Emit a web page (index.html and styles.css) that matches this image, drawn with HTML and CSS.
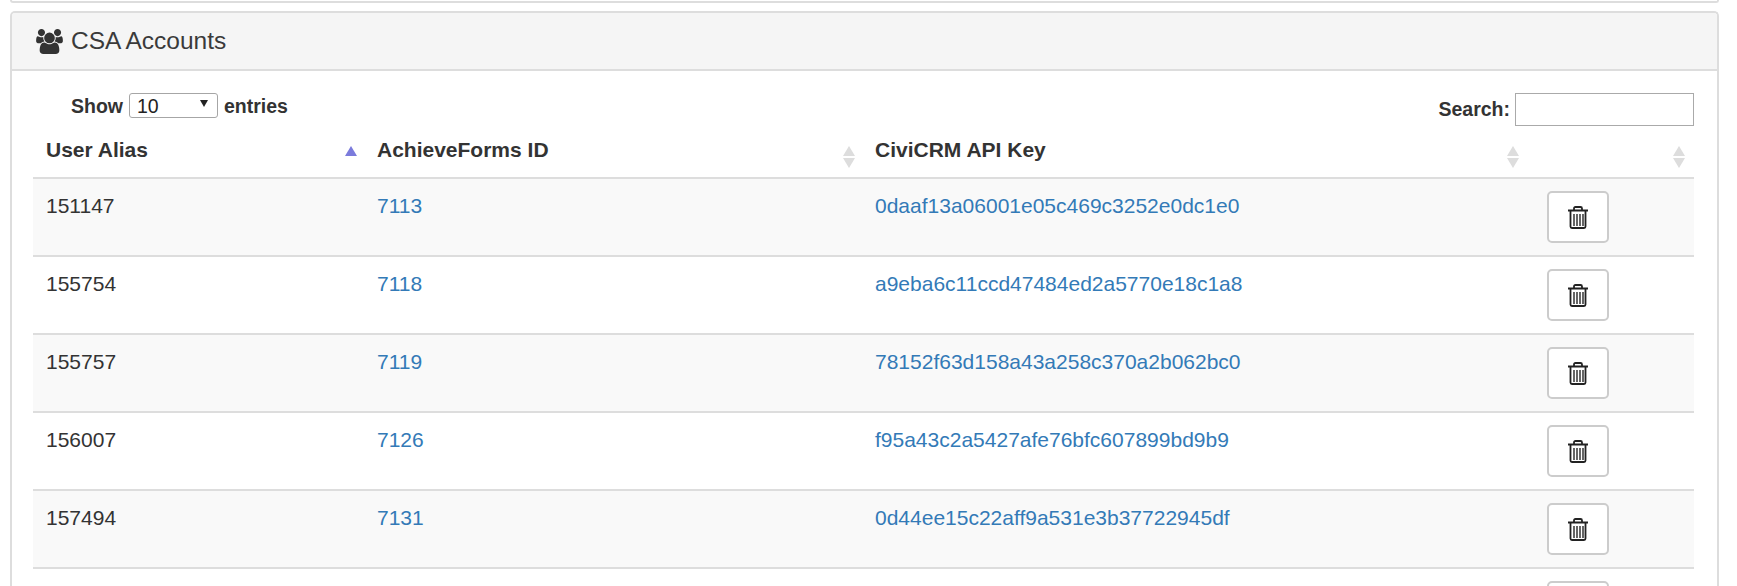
FILE: index.html
```html
<!DOCTYPE html>
<html lang="en">
<head>
<meta charset="utf-8">
<title>CSA Accounts</title>
<link rel="stylesheet" href="styles.css">
</head>
<body>
<div class="page">
  <div class="stub"></div>
  <section class="panel">
    <header class="panel-heading">
      <svg class="users" viewBox="0 0 1920 1792" aria-hidden="true"><path d="M593 896q-162 5-265 128h-134q-82 0-138-40.500t-56-118.500q0-353 124-353 6 0 43.500 21t97.500 42.500 119 21.500q67 0 133-23-5 37-5 66 0 139 81 256zm1071 637q0 120-73 189.500t-194 69.500h-874q-121 0-194-69.500t-73-189.500q0-53 3.500-103.500t14-109 26.500-108.500 43-97.500 62-81 85.500-53.500 111.500-20q10 0 43 21.500t73 48 107 48 135 21.500 135-21.500 107-48 73-48 43-21.500q61 0 111.500 20t85.500 53.500 62 81 43 97.500 26.500 108.500 14 109 3.500 103.500zm-1024-1277q0 106-75 181t-181 75-181-75-75-181 75-181 181-75 181 75 75 181zm704 384q0 159-112.500 271.500t-271.500 112.500-271.500-112.500-112.500-271.500 112.500-271.500 271.500-112.500 271.500 112.500 112.500 271.500zm576 225q0 78-56 118.500t-138 40.500h-134q-103-123-265-128 81-117 81-256 0-29-5-66 66 23 133 23 59 0 119-21.500t97.500-42.500 43.500-21q124 0 124 353zm-128-609q0 106-75 181t-181 75-181-75-75-181 75-181 181-75 181 75 75 181z"/></svg>
      <span class="panel-title">CSA Accounts</span>
    </header>
    <div class="panel-body">
      <div class="controls">
        <label class="length">Show
          <span class="select"><span>10</span><i class="caret"></i></span>
          entries</label>
        <label class="search">Search: <input type="text" class="search-input"></label>
      </div>
      <table class="grid">
        <colgroup><col class="c1"><col class="c2"><col class="c3"><col class="c4"></colgroup>
        <thead>
          <tr>
            <th><div class="th"><span class="th-label">User Alias</span><i class="sort active"></i></div></th>
            <th><div class="th"><span class="th-label">AchieveForms ID</span><i class="sort"></i></div></th>
            <th><div class="th"><span class="th-label">CiviCRM API Key</span><i class="sort"></i></div></th>
            <th><div class="th"><span class="th-label"></span><i class="sort"></i></div></th>
          </tr>
        </thead>
        <tbody>
          <tr class="odd"><td>151147</td><td><a href="#">7113</a></td><td><a href="#">0daaf13a06001e05c469c3252e0dc1e0</a></td><td><button class="del" aria-label="Delete"><svg class="trash" viewBox="0 0 20 23"><use href="#trash"/></svg></button></td></tr>
          <tr><td>155754</td><td><a href="#">7118</a></td><td><a href="#">a9eba6c11ccd47484ed2a5770e18c1a8</a></td><td><button class="del" aria-label="Delete"><svg class="trash" viewBox="0 0 20 23"><use href="#trash"/></svg></button></td></tr>
          <tr class="odd"><td>155757</td><td><a href="#">7119</a></td><td><a href="#">78152f63d158a43a258c370a2b062bc0</a></td><td><button class="del" aria-label="Delete"><svg class="trash" viewBox="0 0 20 23"><use href="#trash"/></svg></button></td></tr>
          <tr><td>156007</td><td><a href="#">7126</a></td><td><a href="#">f95a43c2a5427afe76bfc607899bd9b9</a></td><td><button class="del" aria-label="Delete"><svg class="trash" viewBox="0 0 20 23"><use href="#trash"/></svg></button></td></tr>
          <tr class="odd"><td>157494</td><td><a href="#">7131</a></td><td><a href="#">0d44ee15c22aff9a531e3b37722945df</a></td><td><button class="del" aria-label="Delete"><svg class="trash" viewBox="0 0 20 23"><use href="#trash"/></svg></button></td></tr>
          <tr><td></td><td></td><td></td><td><button class="del" aria-label="Delete"><svg class="trash" viewBox="0 0 20 23"><use href="#trash"/></svg></button></td></tr>
        </tbody>
      </table>
    </div>
  </section>
</div>
<svg class="defs" aria-hidden="true"><defs>
  <g id="trash">
    <path class="tr-line" d="M0 4.500H20M6 4.500V2.500Q6 1 7.500 1H12.500Q14 1 14 2.500V4.500"/>
    <path class="tr-line" d="M2.500 4.500V20.500Q2.500 22 4 22H16Q17.500 22 17.500 20.500V4.500"/>
    <path class="tr-slat" d="M6 8V20M9 8V20M12 8V20M15 8V20"/>
  </g>
</defs></svg>
</body>
</html>
```
FILE: styles.css
```css
html, body { margin: 0; height: 100%; overflow: hidden; background: #fff; }
body { font-family: "Liberation Sans", Arial, sans-serif; font-size: 21px; color: #333; }
.page { padding: 0 18px 0 10px; }
.stub { height: 3px; border: 2px solid #ddd; border-top: 0; border-radius: 0 0 5px 5px; margin-bottom: 8px; box-sizing: border-box; }
.panel { border: 2px solid #ddd; border-radius: 5px; border-bottom: 0; }
.panel-heading { display: flex; align-items: center; height: 56px; padding: 0 0 0 24px; background: #f5f5f5; border-bottom: 2px solid #ddd; border-radius: 3px 3px 0 0; }
.users { width: 27px; height: 25px; fill: #333; margin-right: 8px; }
.panel-title { font-size: 24.500px; color: #3a3a3a; }
.panel-body { padding: 22px 23px 0 21px; }
.controls { display: flex; justify-content: space-between; align-items: flex-start; height: 35px; font-size: 19.500px; font-weight: bold; }
.length { display: flex; align-items: center; gap: 6px; height: 25px; padding-left: 38px; line-height: 28px; }
.select { display: flex; align-items: center; justify-content: space-between; box-sizing: border-box; width: 89px; height: 25px; padding: 0 7px; border: 1.500px solid #a6a6a6; border-radius: 3px; font-weight: normal; color: #222; font-size: 19.500px; }
.caret { width: 0; height: 0; border: 4.500px solid transparent; border-top: 7px solid #222; border-bottom: 0; margin: -4px 2px 0 0; }
.search { display: flex; align-items: center; gap: 5px; height: 33px; }
.search-input { box-sizing: border-box; width: 179px; height: 33px; border: 1px solid #aaa; margin: 0; background: #fff; border-radius: 0; }
.grid { width: 100%; border-collapse: collapse; table-layout: fixed; }
.c1 { width: 331px; }
.c2 { width: 498px; }
.c3 { width: 664px; }
th { height: 50px; padding: 0 6px 0 13px; border-bottom: 2px solid #ddd; text-align: left; font-size: 21px; vertical-align: middle; box-sizing: border-box; }
th:last-child { padding-right: 8px; }
.th { display: flex; justify-content: space-between; align-items: center; }
.th-label { margin-top: -6px; }
.sort { position: relative; display: block; width: 13px; height: 22px; margin-top: 8px; flex: none; }
.sort::before, .sort::after { content: ""; position: absolute; left: 0; width: 0; height: 0; border-left: 6.500px solid transparent; border-right: 6.500px solid transparent; }
.sort::before { top: 0; border-bottom: 10px solid #ddd; }
.sort::after { bottom: 0; border-top: 10px solid #ddd; }
.sort.active::before { border-bottom-color: #7b7bdc; }
.sort.active::after { display: none; }
td { height: 78px; padding: 13px 13px 0; border-bottom: 2px solid #ddd; vertical-align: top; box-sizing: border-box; line-height: 27px; }
.odd td { background: #f9f9f9; }
a { color: #337ab7; text-decoration: none; }
.del { display: flex; align-items: center; justify-content: center; width: 62px; height: 52px; margin: -1px 0 0 8px; padding: 0; background: #fff; border: 2px solid #ccc; border-radius: 5px; }
.trash { width: 20px; height: 23px; }
.tr-line { fill: none; stroke: #222; stroke-width: 1.800; }
.tr-slat { fill: none; stroke: #333; stroke-width: 1.500; }
.defs { position: absolute; width: 0; height: 0; }
```
